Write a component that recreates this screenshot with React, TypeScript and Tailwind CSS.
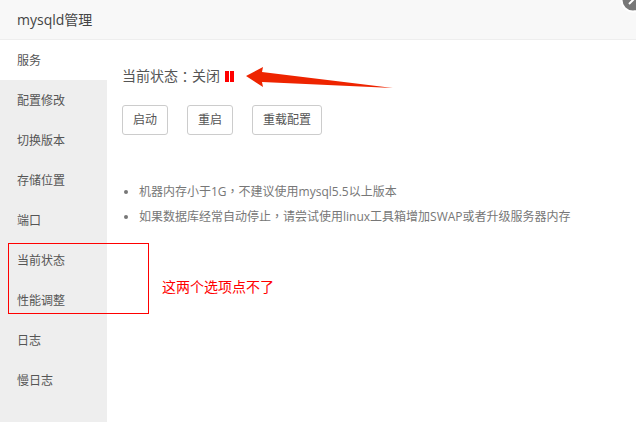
const FONT = "font-['Open_Sans','Noto_Sans_CJK_SC',sans-serif]";
// TC cut of the font centres full-width punctuation, as the screenshot does
const PUNCT = "font-['Noto_Sans_CJK_TC',sans-serif]";

const MENU = ["服务", "配置修改", "切换版本", "存储位置", "端口", "当前状态", "性能调整", "日志", "慢日志"];
const BUTTONS = ["启动", "重启", "重载配置"];

export default function App() {
  return (
    <div className={`relative flex h-[422px] w-[636px] flex-col overflow-hidden bg-white text-xs text-[#555] ${FONT}`}>
      <header className="flex h-10 shrink-0 items-center border-b border-[#eee] bg-[#f8f8f8] pl-[17px] text-sm text-[#444]">
        mysqld管理
      </header>

      <div className="flex min-h-0 flex-1">
        <nav className="w-[107px] shrink-0 bg-[#eee]">
          {MENU.map((name, i) => (
            <div key={name} className={`flex h-10 items-center pl-[17px] pt-[1px] ${i === 0 ? "bg-white" : ""}`}>
              {name}
            </div>
          ))}
        </nav>

        <main className="flex-1 pl-[15px] pt-[27px]">
          <div className="flex h-[18px] items-center text-sm">
            当前状态<span className={PUNCT}>：</span>关闭
            <span className="ml-[5px] flex gap-[1px]">
              <span className="h-[11px] w-1 bg-[#f00]" />
              <span className="h-[11px] w-1 bg-[#f00]" />
            </span>
          </div>

          <div className="mt-5 flex gap-[19px]">
            {BUTTONS.map((label) => (
              <button key={label} className="h-[30px] rounded-[3px] border border-[#ccc] bg-white px-[10px] text-xs text-[#555]">
                {label}
              </button>
            ))}
          </div>

          <ul className="mt-[44px] list-disc pl-[17px] leading-6 text-[#777] marker:text-[#777]">
            <li>机器内存小于1G<span className={PUNCT}>，</span>不建议使用mysql5.5以上版本</li>
            <li>如果数据库经常自动停止<span className={PUNCT}>，</span>请尝试使用linux工具箱增加SWAP或者升级服务器内存</li>
          </ul>
        </main>
      </div>

      {/* close button, cut off by the top edge */}
      <svg className="absolute right-[-10px] top-[-13px]" width="26" height="26" viewBox="0 0 26 26">
        <circle cx="13" cy="13" r="11.5" fill="#777" stroke="#fff" strokeWidth="2" />
        <path d="M9 17 L17 9" stroke="#fff" strokeWidth="2" />
      </svg>

      {/* annotations drawn over the screenshot */}
      <svg className="absolute left-[240px] top-[62px]" width="160" height="34" viewBox="0 0 160 34">
        <path d="M6 14 L23 5 L22 10 L153 26 L22 20 L23 25 Z" fill="#ee2400" />
      </svg>
      <div className="absolute left-2 top-[243px] h-[71px] w-[141px] border border-[#f00]" />
      <div className="absolute left-[162px] top-[277px] text-sm leading-[20px] text-[#f00]">这两个选项点不了</div>
    </div>
  );
}
